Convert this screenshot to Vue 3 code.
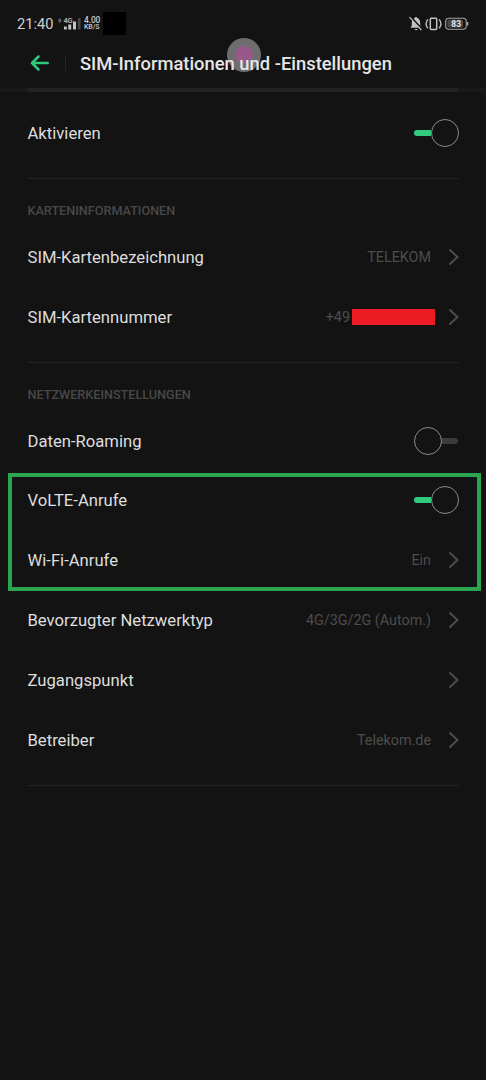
<script setup>
const cardRows = [
  { label: 'SIM-Kartenbezeichnung', value: 'TELEKOM' },
  { label: 'SIM-Kartennummer', value: '+49', redacted: true },
]
const callRows = [
  { label: 'VoLTE-Anrufe', toggle: true },
  { label: 'Wi-Fi-Anrufe', value: 'Ein' },
]
const networkRows = [
  { label: 'Bevorzugter Netzwerktyp', value: '4G/3G/2G (Autom.)' },
  { label: 'Zugangspunkt', value: '' },
  { label: 'Betreiber', value: 'Telekom.de' },
]
</script>

<template>
  <main class="screen">
    <div class="status">
      <span class="clock">21:40</span>
      <svg class="signal" width="24" height="18" viewBox="0 0 24 18">
        <ellipse cx="1.800" cy="5.500" rx="1" ry="1.500" fill="none" stroke="#999" stroke-width=".9" />
        <text x="5.500" y="8" class="tiny">4G</text>
        <path d="M6 11.500h2.800v3H6zM10.300 9.500h2.900v5h-2.900zM15 6.500h3v8h-3z" fill="#c4c4c4" />
        <path d="M19.800 3h2.800v11.500h-2.800z" fill="#454545" />
      </svg>
      <span class="speed"><b class="rate">4.00</b><b class="unit">KB/S</b></span>
      <span class="mask"></span>
      <svg class="system" width="62" height="18" viewBox="0 0 62 18">
        <path d="M2.300 12.800h11.400l-1.500-2V8c0-2.600-1.200-4.400-3-4.900C9 1.700 7 1.700 6.800 3.100 5 3.600 3.800 5.400 3.800 8v2.800zM6.500 14h3.200c-.3 1.500-2.900 1.500-3.200 0z" fill="#c2c2c2" />
        <path d="M2.500 1.800 14.500 15" stroke="#131313" stroke-width="2.200" />
        <path d="M1.500 2.200 13.300 15" stroke="#c2c2c2" stroke-width="1.200" />
        <rect x="22.300" y="3.200" width="6.400" height="11.200" rx="1" fill="none" stroke="#c2c2c2" stroke-width="1.500" />
        <path d="M19.800 4.300q-3.400 4.500 0 9M31.200 4.300q3.400 4.500 0 9" fill="none" stroke="#c2c2c2" stroke-width="1.400" />
        <rect x="37.700" y="3.200" width="20.600" height="11" rx="3.200" fill="#131313" stroke="#a6a6a6" stroke-width="1.100" />
        <rect x="39.300" y="4.800" width="15.800" height="7.800" rx="1.800" fill="#484848" />
        <path d="M59.700 7v3.400" stroke="#a6a6a6" stroke-width="1.300" />
        <text x="48.200" y="11.800" text-anchor="middle" class="battery">83</text>
      </svg>
    </div>

    <header class="header">
      <svg class="back" width="20" height="18" viewBox="0 0 20 18">
        <path d="M8.500 2.500 2 9l6.500 6.500M2 9h15.700" fill="none" stroke="#32cb7d" stroke-width="2.500" stroke-linecap="round" stroke-linejoin="round" />
      </svg>
      <i class="separator"></i>
      <span class="touch"></span>
      <h1>SIM-Informationen und -Einstellungen</h1>
    </header>
    <div class="header-line"></div>

    <section class="activate">
      <div class="row"><span class="label">Aktivieren</span><span class="switch on"></span></div>
    </section>

    <section class="group">
      <h2>KARTENINFORMATIONEN</h2>
      <div v-for="row in cardRows" :key="row.label" class="row">
        <span class="label">{{ row.label }}</span>
        <span class="value">{{ row.value }}</span>
        <span v-if="row.redacted" class="redaction"></span>
        <svg class="chevron" width="12" height="18" viewBox="0 0 12 18"><path d="M2 2l7.500 7L2 16" /></svg>
      </div>
    </section>

    <section class="group">
      <h2>NETZWERKEINSTELLUNGEN</h2>
      <div class="row"><span class="label">Daten-Roaming</span><span class="switch"></span></div>
      <div class="highlighted">
        <div v-for="row in callRows" :key="row.label" class="row">
          <span class="label">{{ row.label }}</span>
          <span v-if="row.toggle" class="switch on"></span>
          <template v-else>
            <span class="value">{{ row.value }}</span>
            <svg class="chevron" width="12" height="18" viewBox="0 0 12 18"><path d="M2 2l7.500 7L2 16" /></svg>
          </template>
        </div>
      </div>
      <div v-for="row in networkRows" :key="row.label" class="row">
        <span class="label">{{ row.label }}</span>
        <span class="value">{{ row.value }}</span>
        <svg class="chevron" width="12" height="18" viewBox="0 0 12 18"><path d="M2 2l7.500 7L2 16" /></svg>
      </div>
    </section>
  </main>
</template>

<style>
body { margin: 0; background: #131313; }
</style>

<style scoped>
*, *::before, *::after { box-sizing: border-box; }
.screen { width: 486px; height: 1080px; overflow: hidden; background: #131313; color: #dedede; font-family: Roboto, sans-serif; }
.status { display: flex; align-items: center; height: 47px; padding: 0 16px 0 17px; }
.clock { width: 36px; font-size: 14.600px; line-height: 18px; color: #d0d0d0; white-space: nowrap; }
.signal { margin-left: 5px; }
.tiny { font: 600 7.500px Roboto, sans-serif; letter-spacing: -.4px; fill: #b5b5b5; }
.speed { display: flex; flex-direction: column; width: 17px; margin-left: 2px; }
.speed b { font-weight: 500; color: #c8c8c8; white-space: nowrap; }
.rate { font-size: 8.400px; line-height: 7px; letter-spacing: -.1px; }
.unit { font-size: 7px; line-height: 6.500px; letter-spacing: -.1px; }
.mask { width: 23px; height: 23px; margin-left: 2px; background: #000; }
.system { margin-left: auto; }
.battery { font: 700 8.500px Roboto, sans-serif; fill: #e0e0e0; }
.header { position: relative; display: flex; align-items: center; height: 33px; padding-left: 30px; }
.back { margin-top: -1px; }
.separator { width: 1px; height: 16px; margin: -2px 0 0 15px; background: #262626; }
h1 { position: relative; margin: 0 0 0 14px; font-size: 18.370px; line-height: 24px; font-weight: 500; color: #e6e6e6; white-space: nowrap; }
.touch { position: absolute; left: 227px; top: -9px; width: 34px; height: 34px; border-radius: 50%; background: radial-gradient(circle at 50% 48%, #98598a 0 7px, #6f6c6f 10px); }
.header-line { height: 4px; margin-top: 8px; background: linear-gradient(90deg, #191919 27px, #222 28px 458px, #191919 459px); }
.activate { height: 87px; padding-top: 11px; margin: 0 27px 0 28px; border-bottom: 1px solid #232323; }
.group { margin: 0 27px 0 28px; padding-bottom: 15px; border-bottom: 1px solid #232323; }
h2 { margin: 0 0 0 -.5px; padding-top: 23px; height: 48px; font-size: 12.650px; line-height: 18px; font-weight: 500; color: #484848; white-space: nowrap; }
.row { display: flex; align-items: center; height: 59.850px; }
.label { padding-top: 2px; margin-left: -.5px; font-size: 16.650px; line-height: 24px; color: #dedede; white-space: nowrap; }
.value { padding-top: 2px; margin-left: auto; font-size: 14.350px; line-height: 22px; color: #4d4d4d; white-space: nowrap; }
.redaction { width: 83px; height: 16px; margin: 0 -4px 0 2px; background: #ee1c25; }
.chevron { flex: none; margin-left: 17px; margin-right: -1px; fill: none; stroke: #4c4c4c; stroke-width: 2; stroke-linecap: round; }
.switch { position: relative; width: 45px; height: 28px; margin-left: auto; }
.switch::before { content: ''; position: absolute; left: 27px; top: 11px; width: 17px; height: 6px; border-radius: 0 3px 3px 0; background: #3b3b3b; }
.switch::after { content: ''; position: absolute; left: 0; top: 0; width: 28px; height: 28px; border: 1px solid #8b8b8b; border-radius: 50%; }
.switch.on::before { left: 0; border-radius: 3px 0 0 3px; background: #32cb7d; }
.switch.on::after { left: 17px; }
.highlighted { position: relative; }
.highlighted::after { content: ''; position: absolute; left: -20px; right: -22px; top: 2px; height: 118px; border: 4px solid #2aa44e; pointer-events: none; }
</style>
